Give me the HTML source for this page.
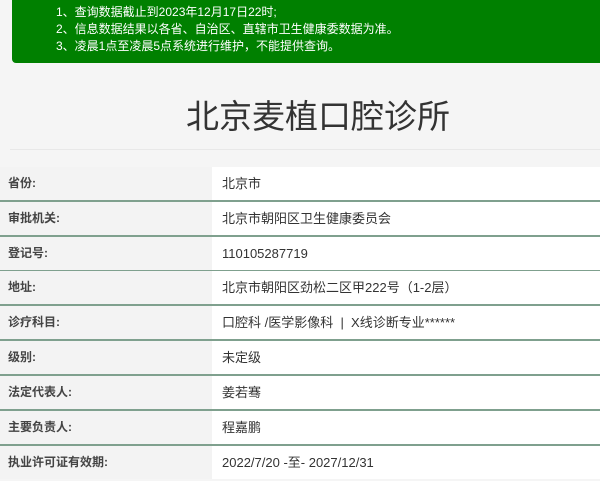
<!DOCTYPE html>
<html><head><meta charset="utf-8"><style>
body{margin:0;width:600px;height:477px;overflow:hidden;background:#f5f5f5;font-family:"Liberation Sans","Noto Sans CJK SC",sans-serif;color:#333;position:relative}
.g{position:absolute;left:12px;top:0;width:600px;height:63px;background:#008000;border-radius:0 0 0 4px;color:#fff;font-size:12px;line-height:17px;padding-top:4px;box-sizing:border-box}
.g div{padding-left:44px}
h1{position:absolute;top:95px;left:0;width:636px;margin:0;text-align:center;font-weight:normal;font-size:33px;line-height:44px;color:#333}
.sep{position:absolute;top:149px;left:10px;width:590px;height:1px;background:#e8e8e8}
.row{position:absolute;left:0;width:600px;height:35px;font-size:12px;line-height:33px}
.l{position:absolute;left:0;width:212px;height:33px;background:#f3f3f3;padding-left:8px;box-sizing:border-box;font-weight:bold;color:#444}
.v{position:absolute;left:212px;width:388px;height:33px;background:#fff;padding-left:10px;box-sizing:border-box;font-size:13px}
.b{position:absolute;left:0;top:33px;width:600px;height:2px;background:#7fa08e}
</style></head><body>
<div class="g"><div>1、查询数据截止到2023年12月17日22时;</div><div>2、信息数据结果以各省、自治区、直辖市卫生健康委数据为准。</div><div>3、凌晨1点至凌晨5点系统进行维护，不能提供查询。</div></div>
<h1>北京麦植口腔诊所</h1>
<div class="sep"></div>
<div class="row" style="top:167px"><div class="l">省份:</div><div class="v">北京市</div><div class="b"></div></div>
<div class="row" style="top:202px"><div class="l">审批机关:</div><div class="v">北京市朝阳区卫生健康委员会</div><div class="b"></div></div>
<div class="row" style="top:237px"><div class="l">登记号:</div><div class="v">110105287719</div><div class="b"></div></div>
<div class="row" style="top:271px"><div class="l">地址:</div><div class="v">北京市朝阳区劲松二区甲222号（1-2层）</div><div class="b"></div></div>
<div class="row" style="top:306px"><div class="l">诊疗科目:</div><div class="v">口腔科 /医学影像科 &nbsp;|&nbsp; X线诊断专业******</div><div class="b"></div></div>
<div class="row" style="top:341px"><div class="l">级别:</div><div class="v">未定级</div><div class="b"></div></div>
<div class="row" style="top:376px"><div class="l">法定代表人:</div><div class="v">姜若骞</div><div class="b"></div></div>
<div class="row" style="top:411px"><div class="l">主要负责人:</div><div class="v">程嘉鹏</div><div class="b"></div></div>
<div class="row" style="top:446px"><div class="l">执业许可证有效期:</div><div class="v">2022/7/20 -至- 2027/12/31</div></div>
</body></html>
